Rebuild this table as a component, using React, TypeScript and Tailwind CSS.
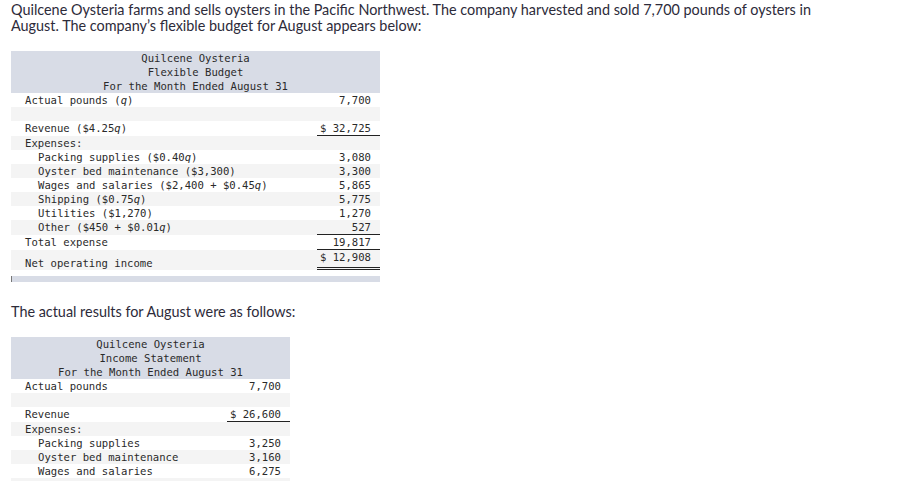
type Row = {
  label: string;
  value?: string;
  indent?: boolean;
  shade?: boolean;
  line?: "single" | "double";
  tall?: boolean;
};

const budgetRows: Row[] = [
  { label: "Actual pounds (q)", value: "7,700" },
  { label: "", shade: true },
  { label: "Revenue ($4.25q)", value: "$ 32,725", line: "single" },
  { label: "Expenses:", shade: true },
  { label: "Packing supplies ($0.40q)", value: "3,080", indent: true },
  { label: "Oyster bed maintenance ($3,300)", value: "3,300", indent: true, shade: true },
  { label: "Wages and salaries ($2,400 + $0.45q)", value: "5,865", indent: true },
  { label: "Shipping ($0.75q)", value: "5,775", indent: true, shade: true },
  { label: "Utilities ($1,270)", value: "1,270", indent: true },
  { label: "Other ($450 + $0.01q)", value: "527", indent: true, shade: true, line: "single" },
  { label: "Total expense", value: "19,817", line: "single" },
  { label: "Net operating income", value: "$ 12,908", shade: true, line: "double", tall: true },
];

const actualRows: Row[] = [
  { label: "Actual pounds", value: "7,700" },
  { label: "", shade: true },
  { label: "Revenue", value: "$ 26,600", line: "single" },
  { label: "Expenses:", shade: true },
  { label: "Packing supplies", value: "3,250", indent: true },
  { label: "Oyster bed maintenance", value: "3,160", indent: true, shade: true },
  { label: "Wages and salaries", value: "6,275", indent: true },
  { label: "Shipping", value: "5,900", indent: true, shade: true },
  { label: "Utilities", value: "1,210", indent: true },
  { label: "Other", value: "510", indent: true, shade: true, line: "single" },
  { label: "Total expense", value: "20,305", line: "single" },
  { label: "Net operating income", value: "$ 6,295", shade: true, line: "double", tall: true },
];

// the formulas set the "q" in italics
function Label({ text }: { text: string }) {
  const idx = text.lastIndexOf("q)");
  if (idx < 0) return <>{text}</>;
  return (
    <>
      {text.slice(0, idx)}
      <span className="italic">q</span>
      {text.slice(idx + 1)}
    </>
  );
}

function Statement({ title, rows, width, footer }: { title: string; rows: Row[]; width: string; footer?: boolean }) {
  return (
    <div className={`${width} font-['DejaVu_Sans_Mono',monospace] text-[10.6px] leading-[14px] text-[#2a2a2a]`}>
      <div className="bg-[#d8dce6] text-center">
        <div>Quilcene Oysteria</div>
        <div>{title}</div>
        <div>For the Month Ended August 31</div>
      </div>
      {rows.map((r, i) => (
        <div key={i} className={`flex ${r.shade ? "bg-[#f4f4f4]" : "bg-white"} ${r.tall ? "h-[20px]" : ""}`}>
          <div className={`flex-1 whitespace-pre ${r.indent ? "pl-[27px]" : "pl-[14px]"} ${r.tall ? "self-end" : ""}`}>
            <Label text={r.label} />
          </div>
          <div className="w-[63px] text-right">
            <span
              className={`block h-full pr-[9px] ${r.line === "single" ? "border-b border-[#222]" : ""} ${
                r.line === "double" ? "border-b-[3px] border-double border-[#222]" : ""
              }`}
            >
              {r.value ?? "\u00a0"}
            </span>
          </div>
        </div>
      ))}
      {footer && <div className="mt-[6px] h-[6px] border-l border-[#777] bg-[#d8dce6]" />}
    </div>
  );
}

export default function App() {
  return (
    <div className="min-h-screen bg-white px-[11px] pt-[2px] font-['Lato',sans-serif] text-[14.4px] leading-[16px] text-[#2d2b3a]">
      <p className="w-[815px]">
        Quilcene Oysteria farms and sells oysters in the Pacific Northwest. The company harvested and sold 7,700 pounds of oysters in
        August. The company’s flexible budget for August appears below:
      </p>
      <div className="mt-[17px]">
        <Statement title="Flexible Budget" rows={budgetRows} width="w-[369px]" footer />
      </div>
      <p className="mt-[22px]">The actual results for August were as follows:</p>
      <div className="mt-[17px]">
        <Statement title="Income Statement" rows={actualRows} width="w-[279px]" />
      </div>
    </div>
  );
}
